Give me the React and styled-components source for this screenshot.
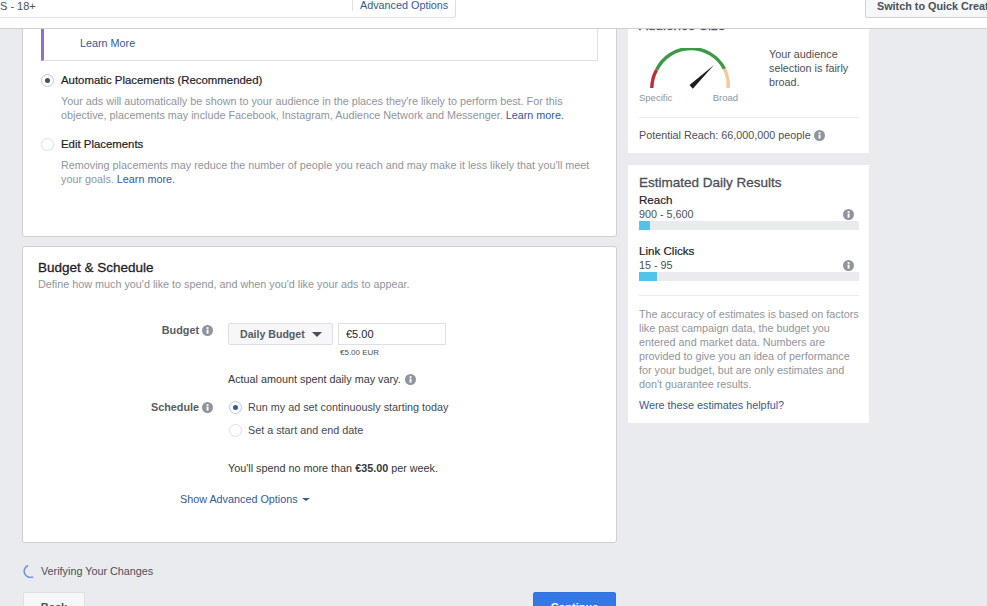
import React from "react"
import styled, { createGlobalStyle } from "styled-components"

const GlobalStyle = createGlobalStyle`
  html, body {
    margin: 0;
    padding: 0;
    background: #e9ebee;
  }
  body {
    font-family: "Liberation Sans", Arial, sans-serif;
    font-size: 10.8px;
    line-height: 14px;
    color: #1d2129;
  }
`

const Page = styled.div`
  width: 987px;
  height: 606px;
  overflow: hidden;
  display: flex;
  flex-direction: column;
  background: #e9ebee;
`

const TopBar = styled.header`
  flex: none;
  height: 29px;
  box-sizing: border-box;
  background: #fff;
  border-bottom: 1px solid #ccd0d5;
  display: flex;
  justify-content: space-between;
  align-items: flex-start;
  overflow: hidden;
`

const SearchBox = styled.div`
  width: 456px;
  height: 18px;
  box-sizing: border-box;
  border: 1px solid #dddfe2;
  border-top: none;
  border-left: none;
  border-radius: 0 0 3px 0;
  display: flex;
  justify-content: space-between;
  align-items: flex-start;
`

const SearchValue = styled.span`
  font-size: 11px;
  line-height: 12px;
  color: #4b4f56;
`

const AdvancedLink = styled.a`
  width: 103px;
  height: 11px;
  box-sizing: border-box;
  border-left: 1px solid #dddfe2;
  padding-left: 7px;
  line-height: 11px;
  white-space: nowrap;
  color: #365899;
`

const QuickButton = styled.button`
  width: 140px;
  height: 19px;
  margin: -1px -18px 0 0;
  padding: 0 0 5px 11px;
  box-sizing: border-box;
  text-align: left;
  white-space: nowrap;
  border: 1px solid #ced0d4;
  border-radius: 2px;
  background: #f6f7f9;
  color: #4b4f56;
  font: bold 10.8px "Liberation Sans", Arial, sans-serif;
`

const Viewport = styled.div`
  flex: 1;
  min-height: 0;
  overflow: hidden;
`

const Scroller = styled.div`
  margin-top: -21px;
  padding-left: 22px;
  display: flex;
  align-items: flex-start;
  gap: 11px;
`

const MainColumn = styled.div`
  width: 595px;
  flex: none;
`

const SideColumn = styled.div`
  width: 241px;
  flex: none;
  display: flex;
  flex-direction: column;
  gap: 12px;
`

const Card = styled.section`
  box-sizing: border-box;
  height: ${(p) => p.$height}px;
  margin-bottom: 9px;
  background: #fff;
  border: 1px solid #ccd0d5;
  border-radius: 3px;
`

const PlacementBody = styled.div`
  padding: 0 18px;
`

const Callout = styled.div`
  height: 52px;
  box-sizing: border-box;
  padding: 27px 0 0 36px;
  background: #fff;
  border: 1px solid #dddfe2;
  border-left: 3px solid #8c72cb;
  border-top: none;
  margin-bottom: 12px;
`

const Link = styled.a`
  color: #365899;
`

const RadioRow = styled.div`
  display: flex;
  align-items: center;
  gap: ${(p) => p.$gap || 7}px;
  height: 14px;
  margin-bottom: ${(p) => p.$after || 0}px;
`

const Radio = styled.span`
  width: 13px;
  height: 13px;
  flex: none;
  box-sizing: border-box;
  border-radius: 50%;
  border: 1px solid ${(p) => (p.$checked ? "#bdc7d8" : "#dddfe2")};
  background: #fff;
  display: flex;
  align-items: center;
  justify-content: center;
  &::after {
    content: "";
    display: ${(p) => (p.$checked ? "block" : "none")};
    width: 5px;
    height: 5px;
    border-radius: 50%;
    background: ${(p) => p.$dot || "#4b4f56"};
  }
`

const OptionLabel = styled.span`
  font-size: 11.4px;
  color: #1d2129;
  -webkit-text-stroke: 0.2px #1d2129;
`

const OptionHelp = styled.p`
  margin: 7px 0 15px 20px;
  color: #90949c;
`

const ScheduleBody = styled.div`
  padding: 12px 15px 0;
`

const CardTitle = styled.h2`
  margin: 0;
  font-size: 13.5px;
  line-height: 18px;
  font-weight: normal;
  -webkit-text-stroke: 0.3px currentColor;
  color: ${(p) => p.$color || "#1d2129"};
`

const CardSubtitle = styled.p`
  margin: 0 0 32px;
  color: #90949c;
`

const FormGrid = styled.div`
  display: grid;
  grid-template-columns: 175px 1fr;
  column-gap: 15px;
`

const FieldLabel = styled.div`
  display: flex;
  justify-content: flex-end;
  align-items: center;
  gap: 3px;
  height: 14px;
  font-weight: bold;
  color: #575b62;
  margin-top: ${(p) => p.$top || 0}px;
`

const BudgetControls = styled.div`
  display: flex;
  gap: 5px;
`

const DropdownButton = styled.div`
  width: 105px;
  height: 22px;
  box-sizing: border-box;
  padding-left: 11px;
  display: flex;
  align-items: center;
  gap: 7px;
  border: 1px solid #dddfe2;
  border-radius: 2px;
  background: #f6f7f9;
  color: #575b62;
  font-weight: bold;
  font-size: 10.6px;
`

const Caret = styled.span`
  width: 0;
  height: 0;
  border-style: solid;
  border-color: ${(p) => p.$color} transparent transparent;
  border-width: ${(p) => p.$drop}px ${(p) => p.$side}px 0;
`

const AmountInput = styled.div`
  width: 108px;
  height: 22px;
  box-sizing: border-box;
  padding-left: 7px;
  display: flex;
  align-items: center;
  border: 1px solid #dddfe2;
  color: #1d2129;
  font-size: 11px;
`

const AmountNote = styled.div`
  margin: 2px 0 0 112px;
  font-size: 8px;
  line-height: 12px;
  color: #4b4f56;
`

const PlainNote = styled.div`
  display: flex;
  align-items: center;
  gap: 4px;
  height: 14px;
  color: #333840;
  margin: ${(p) => p.$top || 0}px 0 ${(p) => p.$after || 0}px;
`

const ScheduleOptions = styled.div`
  margin-top: 14px;
  padding-left: 1px;
  color: #444950;
`

const AdvancedToggle = styled(Link)`
  display: flex;
  align-items: center;
  gap: 4px;
  margin: 17px 0 0 142px;
`

const Status = styled.div`
  display: flex;
  align-items: center;
  gap: 6px;
  height: 14px;
  margin: 21px 0 14px 1px;
  color: #4b4f56;
`

const Actions = styled.div`
  display: flex;
  justify-content: space-between;
  padding: 0 1px;
`

const ActionButton = styled.button`
  width: ${(p) => p.$width}px;
  height: 30px;
  box-sizing: border-box;
  border: 1px solid ${(p) => (p.$primary ? "#3272e0" : "#dddfe2")};
  border-radius: 2px;
  background: ${(p) => (p.$primary ? "#3578e5" : "#f6f7f9")};
  color: ${(p) => (p.$primary ? "#fff" : "#4b4f56")};
  font: bold 11px "Liberation Sans", Arial, sans-serif;
`

const SidePanel = styled.section`
  box-sizing: border-box;
  height: ${(p) => p.$height}px;
  padding: ${(p) => p.$top}px 10px 0 11px;
  background: #fff;
`

const GaugeRow = styled.div`
  display: flex;
  align-items: flex-start;
  margin-top: ${(p) => p.$top}px;
`

const Gauge = styled.div`
  width: 100px;
  margin-right: 30px;
`

const GaugeDrawing = styled.svg`
  display: block;
  width: 100px;
  height: 46px;
`

const GaugeScale = styled.div`
  display: flex;
  justify-content: space-between;
  font-size: 9.5px;
  line-height: 12px;
  color: #90949c;
  padding-right: 1px;
  margin-top: -2px;
`

const GaugeText = styled.p`
  margin: -1px 0 0;
  color: #4b4f56;
`

const Divider = styled.hr`
  border: none;
  height: 1px;
  background: #e9ebee;
  margin: ${(p) => p.$top}px 0 ${(p) => p.$after}px;
`

const ReachLine = styled.div`
  display: flex;
  align-items: center;
  gap: 3px;
  color: #4b4f56;
`

const MetricList = styled.div`
  margin-top: 1px;
`

const MetricName = styled.div`
  font-size: 11.6px;
  color: #1d2129;
  -webkit-text-stroke: 0.2px #1d2129;
`

const MetricValue = styled.div`
  display: flex;
  justify-content: space-between;
  align-items: center;
  padding-right: 5px;
  color: #4b4f56;
`

const MeterTrack = styled.div`
  height: 9px;
  margin: 0 0 ${(p) => p.$after}px;
  background: #e9ebee;
`

const MeterFill = styled.div`
  height: 100%;
  background: #52c4ec;
`

const Disclaimer = styled.p`
  margin: 0 0 7px;
  color: #90949c;
`

const InfoIcon = () => (
  <svg width="11" height="11" viewBox="0 0 11 11" style={{ flex: "none" }}>
    <circle cx="5.5" cy="5.5" r="5.5" fill="#90949c" />
    <rect x="4.6" y="4.6" width="1.9" height="4" fill="#fff" />
    <rect x="4.6" y="2.2" width="1.9" height="1.7" fill="#fff" />
  </svg>
)

const SpeedGauge = () => (
  <GaugeDrawing viewBox="0 0 100 46">
    <path d="M12.8 40 A38 38 0 0 1 17.5 22" fill="none" stroke="#bd2d33" strokeWidth="3.4" />
    <path d="M17.5 22 A38 38 0 0 1 85.5 21" fill="none" stroke="#3c9a46" strokeWidth="3.4" />
    <path d="M85.5 21 A38 38 0 0 1 89.2 40" fill="none" stroke="#f6c99c" strokeWidth="3.4" />
    <path d="M50.5 37 L75 17 L53.8 40.8 Z" fill="#1c1e21" />
  </GaugeDrawing>
)

const Spinner = () => (
  <svg width="12" height="14" viewBox="0 0 12 14">
    <path d="M5 1.5 A6 6 0 0 0 10 13" fill="none" stroke="#6d94dd" strokeWidth="1.6" />
  </svg>
)

const METRICS = [
  { name: "Reach", value: "900 - 5,600", fill: 11, after: 14 },
  { name: "Link Clicks", value: "15 - 95", fill: 18, after: 14 },
]

const App = () => (
  <Page>
    <GlobalStyle />
    <TopBar>
      <SearchBox>
        <SearchValue>S - 18+</SearchValue>
        <AdvancedLink>Advanced Options</AdvancedLink>
      </SearchBox>
      <QuickButton>Switch to Quick Creation</QuickButton>
    </TopBar>
    <Viewport>
      <Scroller>
        <MainColumn>
          <Card $height={229}>
            <PlacementBody>
              <Callout>
                <Link>Learn More</Link>
              </Callout>
              <RadioRow>
                <Radio $checked />
                <OptionLabel>Automatic Placements (Recommended)</OptionLabel>
              </RadioRow>
              <OptionHelp>
                Your ads will automatically be shown to your audience in the places they're likely to
                perform best. For this objective, placements may include Facebook, Instagram, Audience
                Network and Messenger. <Link>Learn more.</Link>
              </OptionHelp>
              <RadioRow>
                <Radio />
                <OptionLabel>Edit Placements</OptionLabel>
              </RadioRow>
              <OptionHelp>
                Removing placements may reduce the number of people you reach and may make it less
                likely that you'll meet your goals. <Link>Learn more.</Link>
              </OptionHelp>
            </PlacementBody>
          </Card>
          <Card $height={297}>
            <ScheduleBody>
              <CardTitle>Budget &amp; Schedule</CardTitle>
              <CardSubtitle>
                Define how much you'd like to spend, and when you'd like your ads to appear.
              </CardSubtitle>
              <FormGrid>
                <FieldLabel>
                  Budget <InfoIcon />
                </FieldLabel>
                <div>
                  <BudgetControls>
                    <DropdownButton>
                      Daily Budget <Caret $color="#4b4f56" $drop={5} $side={5} />
                    </DropdownButton>
                    <AmountInput>€5.00</AmountInput>
                  </BudgetControls>
                  <AmountNote>€5.00 EUR</AmountNote>
                  <PlainNote $top={13}>
                    Actual amount spent daily may vary. <InfoIcon />
                  </PlainNote>
                </div>
                <FieldLabel $top={14}>
                  Schedule <InfoIcon />
                </FieldLabel>
                <ScheduleOptions>
                  <RadioRow $gap={6} $after={9}>
                    <Radio $checked $dot="#365899" />
                    <span>Run my ad set continuously starting today</span>
                  </RadioRow>
                  <RadioRow $gap={6}>
                    <Radio />
                    <span>Set a start and end date</span>
                  </RadioRow>
                </ScheduleOptions>
                <span />
                <PlainNote $top={24}>
                  <span>
                    You'll spend no more than <b>€35.00</b> per week.
                  </span>
                </PlainNote>
              </FormGrid>
              <AdvancedToggle>
                Show Advanced Options <Caret $color="#365899" $drop={3} $side={4} />
              </AdvancedToggle>
            </ScheduleBody>
          </Card>
          <Status>
            <Spinner />
            Verifying Your Changes
          </Status>
          <Actions>
            <ActionButton $width={62}>Back</ActionButton>
            <ActionButton $width={83} $primary>
              Continue
            </ActionButton>
          </Actions>
        </MainColumn>
        <SideColumn>
          <SidePanel $height={145} $top={9}>
            <CardTitle $color="#4b4f56">Audience Size</CardTitle>
            <GaugeRow $top={13}>
              <Gauge>
                <SpeedGauge />
                <GaugeScale>
                  <span>Specific</span>
                  <span>Broad</span>
                </GaugeScale>
              </Gauge>
              <GaugeText>
                Your audience
                <br />
                selection is fairly
                <br />
                broad.
              </GaugeText>
            </GaugeRow>
            <Divider $top={13} $after={10} />
            <ReachLine>
              Potential Reach: 66,000,000 people <InfoIcon />
            </ReachLine>
          </SidePanel>
          <SidePanel $height={258} $top={9}>
            <CardTitle $color="#4b4f56">Estimated Daily Results</CardTitle>
            <MetricList>
              {METRICS.map((m) => (
                <div key={m.name}>
                  <MetricName>{m.name}</MetricName>
                  <MetricValue>
                    {m.value} <InfoIcon />
                  </MetricValue>
                  <MeterTrack $after={m.after}>
                    <MeterFill style={{ width: m.fill }} />
                  </MeterTrack>
                </div>
              ))}
            </MetricList>
            <Divider $top={0} $after={11} />
            <Disclaimer>
              The accuracy of estimates is based on factors like past campaign data, the budget you
              entered and market data. Numbers are provided to give you an idea of performance for
              your budget, but are only estimates and don't guarantee results.
            </Disclaimer>
            <Link>Were these estimates helpful?</Link>
          </SidePanel>
        </SideColumn>
      </Scroller>
    </Viewport>
  </Page>
)

export default App
